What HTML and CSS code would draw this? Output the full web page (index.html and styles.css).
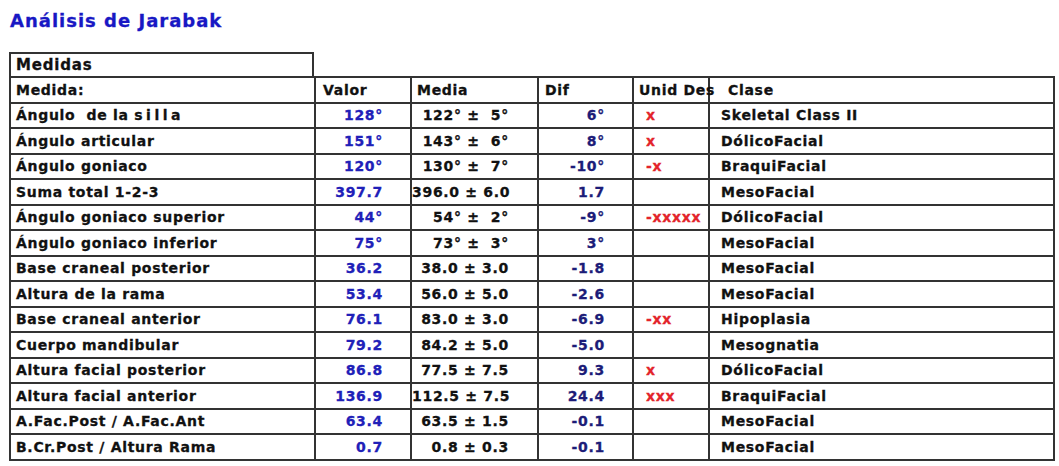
FILE: index.html
```html
<!DOCTYPE html>
<html lang="es">
<head>
<meta charset="utf-8">
<title>Análisis de Jarabak</title>
<link rel="stylesheet" href="styles.css">
</head>
<body>
<h1 class="title">Análisis de Jarabak</h1>
<div class="caption">Medidas</div>
<table class="grid">
  <colgroup>
    <col class="c-name"><col class="c-val"><col class="c-mean"><col class="c-dif"><col class="c-unit"><col class="c-cls">
  </colgroup>
  <thead>
    <tr>
      <th class="name">Medida:</th>
      <th class="hval">Valor</th>
      <th class="hmean">Media</th>
      <th class="hdif">Dif</th>
      <th class="hunit">Unid Des</th>
      <th class="hcls">Clase</th>
    </tr>
  </thead>
  <tbody>
    <tr><td class="name">Ángulo&nbsp;&nbsp;de la <span class="wide">silla</span></td><td class="val">128°</td><td class="mean">122° ±&nbsp;&nbsp;5°</td><td class="dif">6°</td><td class="unit">x</td><td class="cls">Skeletal Class II</td></tr>
    <tr><td class="name">Ángulo articular</td><td class="val">151°</td><td class="mean">143° ±&nbsp;&nbsp;6°</td><td class="dif">8°</td><td class="unit">x</td><td class="cls">DólicoFacial</td></tr>
    <tr><td class="name">Ángulo goniaco</td><td class="val">120°</td><td class="mean">130° ±&nbsp;&nbsp;7°</td><td class="dif">-10°</td><td class="unit">-x</td><td class="cls">BraquiFacial</td></tr>
    <tr><td class="name">Suma total 1-2-3</td><td class="val">397.7</td><td class="mean">396.0 ± 6.0</td><td class="dif">1.7</td><td class="unit"></td><td class="cls">MesoFacial</td></tr>
    <tr><td class="name">Ángulo goniaco superior</td><td class="val">44°</td><td class="mean">54° ±&nbsp;&nbsp;2°</td><td class="dif">-9°</td><td class="unit">-xxxxx</td><td class="cls">DólicoFacial</td></tr>
    <tr><td class="name">Ángulo goniaco inferior</td><td class="val">75°</td><td class="mean">73° ±&nbsp;&nbsp;3°</td><td class="dif">3°</td><td class="unit"></td><td class="cls">MesoFacial</td></tr>
    <tr><td class="name">Base craneal posterior</td><td class="val">36.2</td><td class="mean">38.0 ± 3.0</td><td class="dif">-1.8</td><td class="unit"></td><td class="cls">MesoFacial</td></tr>
    <tr><td class="name">Altura de la rama</td><td class="val">53.4</td><td class="mean">56.0 ± 5.0</td><td class="dif">-2.6</td><td class="unit"></td><td class="cls">MesoFacial</td></tr>
    <tr><td class="name">Base craneal anterior</td><td class="val">76.1</td><td class="mean">83.0 ± 3.0</td><td class="dif">-6.9</td><td class="unit">-xx</td><td class="cls">Hipoplasia</td></tr>
    <tr><td class="name">Cuerpo mandibular</td><td class="val">79.2</td><td class="mean">84.2 ± 5.0</td><td class="dif">-5.0</td><td class="unit"></td><td class="cls">Mesognatia</td></tr>
    <tr><td class="name">Altura facial posterior</td><td class="val">86.8</td><td class="mean">77.5 ± 7.5</td><td class="dif">9.3</td><td class="unit">x</td><td class="cls">DólicoFacial</td></tr>
    <tr><td class="name">Altura facial anterior</td><td class="val">136.9</td><td class="mean">112.5 ± 7.5</td><td class="dif">24.4</td><td class="unit">xxx</td><td class="cls">BraquiFacial</td></tr>
    <tr><td class="name">A.Fac.Post / A.Fac.Ant</td><td class="val">63.4</td><td class="mean">63.5 ± 1.5</td><td class="dif">-0.1</td><td class="unit"></td><td class="cls">MesoFacial</td></tr>
    <tr><td class="name">B.Cr.Post / Altura Rama</td><td class="val">0.7</td><td class="mean">0.8 ± 0.3</td><td class="dif">-0.1</td><td class="unit"></td><td class="cls">MesoFacial</td></tr>
  </tbody>
</table>
</body>
</html>
```

FILE: styles.css
```css
html, body {
  margin: 0;
  padding: 0;
  background: #ffffff;
}

body {
  padding: 10px 6px 0 9px;
  font-family: "DejaVu Sans", "Liberation Sans", sans-serif;
  font-weight: bold;
  color: #111111;
}

.title {
  margin: 0 0 20px 1px;
  font-size: 18px;
  line-height: 22px;
  font-weight: bold;
  letter-spacing: 1px;
  color: #1818c4;
  -webkit-text-stroke: 0.3px currentColor;
}

.caption {
  box-sizing: border-box;
  width: 305px;
  height: 24px;
  border: 2px solid #333333;
  border-bottom: none;
  padding: 0 0 0 5px;
  font-size: 15px;
  line-height: 22px;
  letter-spacing: 0.8px;
  color: #111111;
  -webkit-text-stroke: 0.3px currentColor;
}

.grid {
  border-collapse: collapse;
  table-layout: fixed;
  width: 1044px;
  font-size: 14px;
  letter-spacing: 0.7px;
}

.grid col.c-name { width: 305px; }
.grid col.c-val { width: 96px; }
.grid col.c-mean { width: 127px; }
.grid col.c-dif { width: 95px; }
.grid col.c-unit { width: 76px; }
.grid col.c-cls { width: 345px; }

.grid th,
.grid td {
  border: 2px solid #333333;
  height: 23.5px;
  padding: 0;
  line-height: 20px;
  white-space: nowrap;
  text-align: left;
  vertical-align: middle;
  font-weight: bold;
  -webkit-text-stroke: 0.3px currentColor;
}

.grid th {
  color: #111111;
}

.grid .name { padding-left: 5px; color: #111111; }
.grid .hval { padding-left: 7px; }
.grid .hmean { padding-left: 5px; }
.grid .hdif { padding-left: 6px; }
.grid .hunit { padding-left: 5px; overflow: visible; }
.grid .hcls { padding-left: 18px; }

.wide {
  letter-spacing: 3.5px;
}

.grid .val {
  text-align: right;
  padding-right: 27px;
  color: #2020b8;
}

.grid .mean {
  text-align: right;
  padding-right: 28px;
  color: #111111;
}

.grid .dif {
  text-align: right;
  padding-right: 27px;
  color: #1c1c78;
}

.grid .unit {
  padding-left: 12px;
  color: #e3232a;
}

.grid .cls {
  padding-left: 11px;
  color: #111111;
}
```
